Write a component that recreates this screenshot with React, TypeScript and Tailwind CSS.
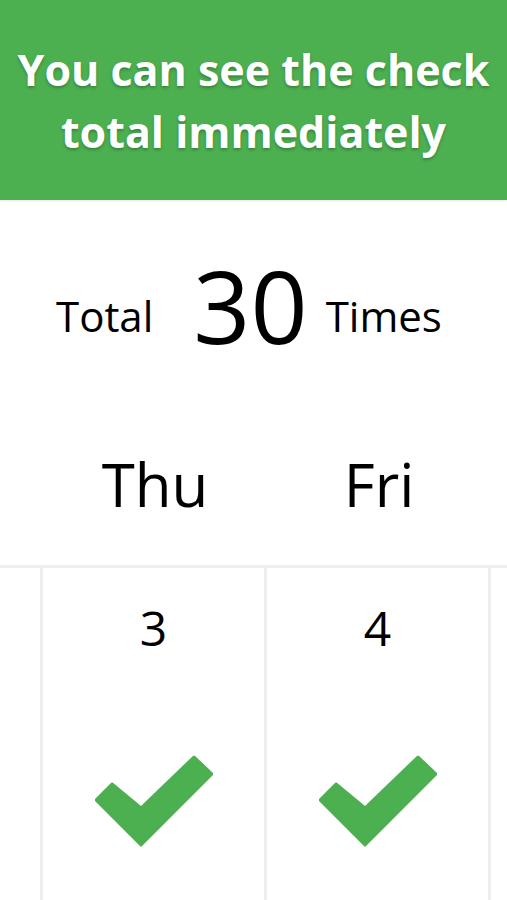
import React from "react";

function Check() {
  return (
    <svg width="118" height="92" viewBox="-1 -1 118 92" className="block">
      <polygon
        points="16,28 45,52 98,1 116,18 45,89 0,44"
        fill="#4caf50"
        stroke="#4caf50"
        strokeWidth="3"
        strokeLinejoin="round"
      />
    </svg>
  );
}

const days = [
  { d: "", n: "", ok: false },
  { d: "Thu", n: "3", ok: true },
  { d: "Fri", n: "4", ok: true },
  { d: "", n: "", ok: false },
];

export default function App() {
  return (
    <div
      className="w-[507px] h-[900px] overflow-hidden bg-white text-black"
      style={{ fontFamily: '"Open Sans", "Noto Sans", sans-serif' }}
    >
      <div className="h-[200px] bg-[#4caf50] flex items-center justify-center shadow-[0_1px_2px_rgba(0,0,0,0.1)]">
        <h1 className="text-white font-bold text-[43px] leading-[62px] text-center pt-[2px] [text-shadow:0_2px_3px_rgba(0,0,0,0.25)]">
          You can see the check
          <br />
          total immediately
        </h1>
      </div>

      <div className="h-[237px] flex items-start pt-[71px] pl-[56px]">
        <span className="text-[42px] leading-[60px] mt-[15px]">Total</span>
        <span className="text-[100px] leading-[120px] ml-[40px] -mt-[26px]">30</span>
        <span className="text-[42px] leading-[60px] mt-[15px] ml-[18px]">Times</span>
      </div>

      <div className="flex -ml-[181px] pt-[7px]">
        {days.map((x, i) => (
          <div key={i} className="w-[224px] h-[80px] shrink-0 flex justify-center">
            <span className="text-[60px] leading-[80px]">{x.d}</span>
          </div>
        ))}
      </div>

      <div className="mt-[41px] border-t-[3px] border-[#eeeeee] flex -ml-[181px]">
        {days.map((x, i) => (
          <div
            key={i}
            className="w-[224px] h-[340px] shrink-0 border-r-[3px] border-[#eeeeee] flex flex-col items-center"
          >
            <span className="text-[48px] leading-[60px] h-[60px] mt-[30px]">{x.n}</span>
            <div className="mt-[97px] h-[92px]">{x.ok && <Check />}</div>
          </div>
        ))}
      </div>
    </div>
  );
}
